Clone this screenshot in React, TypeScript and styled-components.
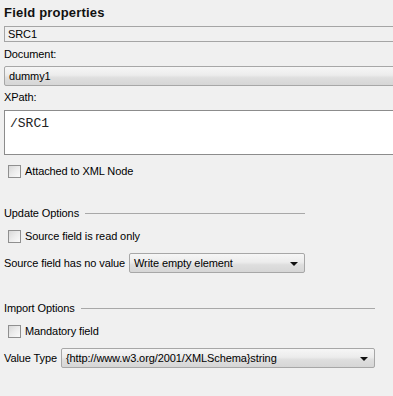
import * as React from 'react'
import styled, { createGlobalStyle } from 'styled-components'

const GlobalStyle = createGlobalStyle`
    html, body {
        margin: 0;
        padding: 0;
        background: #f0f0f0;
        overflow: hidden;
    }
    body {
        font-family: "Liberation Sans", Arial, sans-serif;
        font-size: 11px;
        letter-spacing: -0.1px;
        color: #000;
    }
`

const App = () => (
    <>
        <GlobalStyle />
        <Panel>
            <Title>Field properties</Title>
            <TextField>SRC1</TextField>
            <Label>Document:</Label>
            <Combo $top={4} $width={400}>
                <ComboText>dummy1</ComboText>
            </Combo>
            <Label $top={3}>XPath:</Label>
            <XPathArea>/SRC1</XPathArea>
            <CheckRow $top={8}>
                <Box />
                <span>Attached to XML Node</span>
            </CheckRow>

            <GroupTitle $top={26} $lineWidth={220}>
                <span>Update Options</span>
                <Line />
            </GroupTitle>
            <CheckRow $top={7}>
                <Box />
                <span>Source field is read only</span>
            </CheckRow>
            <FieldRow>
                <FieldLabel>Source field has no value</FieldLabel>
                <Combo $width={176}>
                    <ComboText>Write empty element</ComboText>
                    <Arrow />
                </Combo>
            </FieldRow>

            <GroupTitle $top={27} $lineWidth={294}>
                <span>Import Options</span>
                <Line />
            </GroupTitle>
            <CheckRow $top={7}>
                <Box />
                <span>Mandatory field</span>
            </CheckRow>
            <FieldRow>
                <FieldLabel>Value Type</FieldLabel>
                <Combo $width={314}>
                    <ComboText>{'{http://www.w3.org/2001/XMLSchema}string'}</ComboText>
                    <Arrow />
                </Combo>
            </FieldRow>
        </Panel>
    </>
)

const Panel = styled.div`
    display: flex;
    flex-direction: column;
    align-items: flex-start;
    width: 393px;
    height: 396px;
    padding: 4px 0 0 4px;
    box-sizing: border-box;
    overflow: hidden;
`

const Title = styled.div`
    font-size: 13px;
    font-weight: bold;
    letter-spacing: 0.2px;
    line-height: 18px;
    color: #111;
`

const TextField = styled.div`
    margin-top: 4px;
    width: 400px;
    flex-shrink: 0;
    height: 16px;
    box-sizing: border-box;
    border: 1px solid #a5a5a5;
    border-right: none;
    background: #f0f0f0;
    padding-left: 3px;
    line-height: 14px;
`

const Label = styled.div<{ $top?: number }>`
    margin-top: ${p => p.$top ?? 4}px;
    line-height: 16px;
`

const Combo = styled.div<{ $top?: number; $width: number }>`
    margin-top: ${p => p.$top ?? 0}px;
    display: flex;
    align-items: center;
    flex-shrink: 0;
    width: ${p => p.$width}px;
    height: 20px;
    box-sizing: border-box;
    border: 1px solid #a7a7a7;
    border-radius: 2px;
    background: linear-gradient(#f6f6f6 0%, #ececec 45%, #dedede 60%, #d6d6d6 100%);
    padding: 0 6px 0 4px;
`

const ComboText = styled.span`
    flex: 1;
    white-space: nowrap;
    line-height: 18px;
`

const Arrow = styled.span`
    width: 0;
    height: 0;
    border-left: 4px solid transparent;
    border-right: 4px solid transparent;
    border-top: 4px solid #111;
    margin-top: 2px;
`

const XPathArea = styled.div`
    margin-top: 5px;
    width: 400px;
    flex-shrink: 0;
    height: 45px;
    box-sizing: border-box;
    border: 1px solid #8c8c8c;
    border-right: none;
    background: #fff;
    padding: 5px 0 0 5px;
    font-family: "Liberation Mono", "Courier New", monospace;
    font-size: 13px;
    letter-spacing: 0;
    line-height: 16px;
    color: #222;
`

const CheckRow = styled.div<{ $top: number }>`
    margin-top: ${p => p.$top}px;
    display: flex;
    align-items: center;
    gap: 4px;
    padding-left: 4px;
    height: 16px;
`

const Box = styled.span`
    width: 13px;
    height: 13px;
    box-sizing: border-box;
    border: 1px solid #8f8f8f;
    background: linear-gradient(135deg, #d8d8d8 0%, #ececec 50%, #fafafa 100%);
`

const GroupTitle = styled.div<{ $top: number; $lineWidth: number }>`
    margin-top: ${p => p.$top}px;
    display: flex;
    align-items: center;
    gap: 6px;
    height: 16px;
    & > div {
        width: ${p => p.$lineWidth}px;
    }
`

const Line = styled.div`
    height: 1px;
    background: #a8a8a8;
    margin-top: 1px;
`

const FieldRow = styled.div`
    margin-top: 9px;
    display: flex;
    align-items: center;
    gap: 4px;
`

const FieldLabel = styled.span`
    white-space: nowrap;
`

export default App
